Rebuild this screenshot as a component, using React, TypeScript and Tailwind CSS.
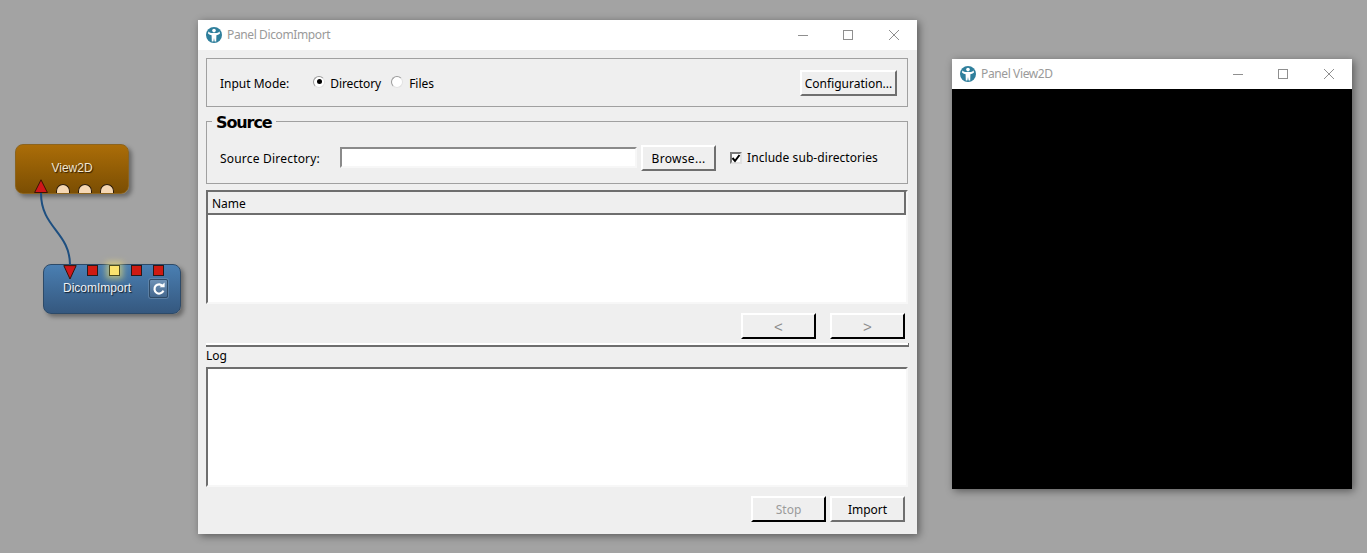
import React from "react";

const uiFont = "font-['Noto_Sans',sans-serif]";

function PanelLogo() {
  return (
    <svg width="16" height="16" viewBox="0 0 16 16" className="shrink-0">
      <circle cx="8" cy="8" r="8" fill="#2f7f9c" />
      <circle cx="8" cy="3.6" r="1.8" fill="#fff" />
      <path d="M2.4 4.4 C4 6 6 6 8 6 C10 6 12 6 13.6 4.4 L14 6.4 C12.6 7.6 11.4 8 10.4 8.2 L10.2 14.6 L8.6 14.6 L8 11 L7.4 14.6 L5.8 14.6 L5.6 8.2 C4.6 8 3.4 7.6 2 6.4 Z" fill="#fff" />
    </svg>
  );
}

function TitleBar({ title }: { title: string }) {
  return (
    <div className="h-[30px] bg-white flex items-center pl-2 shrink-0">
      <PanelLogo />
      <span className={`ml-[5px] text-[12px] tracking-[-0.38px] text-[#9a9a9a] ${uiFont}`}>{title}</span>
      <div className="ml-auto flex items-center">
        <svg width="46" height="12" viewBox="0 0 46 12"><path d="M19 6.5 H29" stroke="#8f8f8f" strokeWidth="1" /></svg>
        <svg width="46" height="12" viewBox="0 0 46 12"><rect x="18.5" y="1.5" width="9" height="9" fill="none" stroke="#8f8f8f" /></svg>
        <svg width="46" height="12" viewBox="0 0 46 12"><path d="M18 1 L28 11 M28 1 L18 11" stroke="#8f8f8f" strokeWidth="1" /></svg>
      </div>
    </div>
  );
}

function QtButton({ label, disabled, dark, className }: { label: string; disabled?: boolean; dark?: boolean; className: string }) {
  const edge = dark ? "border-r-[#000] border-b-[#000]" : "border-r-[#6f6f6f] border-b-[#6f6f6f]";
  return (
    <button className={`h-[26px] pt-[2px] bg-[#efefef] border-2 border-t-white border-l-white ${edge} text-[12px] leading-none ${disabled ? "text-[#9b9b9b]" : "text-black"} ${uiFont} ${className}`}>
      {label}
    </button>
  );
}

function ArrowButton({ label }: { label: string }) {
  return (
    <button className="h-[26px] w-[75px] bg-[#efefef] border-2 border-t-white border-l-white border-r-black border-b-black text-[15px] leading-none text-[#8c8c8c] font-['Liberation_Sans',sans-serif]">
      {label}
    </button>
  );
}

function SunkenBox({ className, children }: { className: string; children?: React.ReactNode }) {
  return (
    <div className={`bg-white border-2 border-t-[#6e6e6e] border-l-[#6e6e6e] border-r-[#f7f7f7] border-b-[#f7f7f7] ${className}`}>{children}</div>
  );
}

function Radio({ className, checked }: { className: string; checked?: boolean }) {
  return (
    <span className={`w-[12px] h-[12px] rounded-full bg-white border border-t-[#9a9a9a] border-l-[#9a9a9a] border-r-[#e2e2e2] border-b-[#e2e2e2] flex items-center justify-center ${className}`}>
      {checked && <span className="w-[5px] h-[5px] rounded-full bg-black" />}
    </span>
  );
}

function DicomWindow() {
  return (
    <div className="absolute left-[198px] top-[20px] w-[719px] h-[514px] bg-[#efefef] flex flex-col shadow-[2px_2px_8px_rgba(0,0,0,0.45)]">
      <TitleBar title="Panel DicomImport" />
      <div className={`flex-1 flex flex-col pl-2 pr-[9px] pt-2 text-[12px] text-black ${uiFont}`}>
        <div className="h-[49px] border border-[#a0a0a0] flex items-center pl-[13px] pr-[11px] shrink-0">
          <span className="mt-[2px]">Input Mode:</span>
          <Radio checked className="ml-[24px] -mt-[2px]" />
          <span className="ml-[5px] mt-[2px] tracking-[-0.1px]">Directory</span>
          <Radio className="ml-[10px] -mt-[2px]" />
          <span className="ml-[6px] mt-[2px]">Files</span>
          <QtButton label="Configuration..." className="ml-auto -mr-px w-[97px]" />
        </div>

        <div className="relative mt-[14px] h-[63px] border border-[#a0a0a0] flex items-center pl-[13px] shrink-0">
          <span className="absolute left-[5px] -top-[9px] px-[4px] bg-[#efefef] text-[16px] leading-[20px] font-bold font-['DejaVu_Sans',sans-serif] tracking-[-1.1px]">Source</span>
          <span className="mt-[12px] tracking-[0.2px]">Source Directory:</span>
          <SunkenBox className="ml-[20px] mt-[10px] w-[297px] h-[21px] border-t-[#8a8a8a] border-l-[#8a8a8a]" />
          <QtButton label="Browse..." className="ml-[4px] mt-[10px] w-[75px] tracking-[0.3px]" />
          <span className="ml-[14px] mt-[10px] w-[12px] h-[12px] bg-white border-2 border-t-[#7a7a7a] border-l-[#7a7a7a] border-r-[#e2e2e2] border-b-[#e2e2e2] flex items-center justify-center">
            <svg width="10" height="10" viewBox="0 0 10 10" className="shrink-0"><path d="M1.5 5 L4 8 L8.5 2" fill="none" stroke="#000" strokeWidth="2" /></svg>
          </span>
          <span className="ml-[5px] mt-[11px] tracking-[0.07px]">Include sub-directories</span>
        </div>

        <SunkenBox className="mt-[6px] h-[114px] flex flex-col shrink-0">
          <div className="h-[23px] bg-[#efefef] border-b-2 border-b-[#6e6e6e] border-r-2 border-r-[#6e6e6e] pl-[4px] leading-[23px]">Name</div>
        </SunkenBox>

        <div className="mt-[9px] flex justify-end gap-[14px] pr-[3px] shrink-0">
          <ArrowButton label="<" />
          <ArrowButton label=">" />
        </div>

        <div className="relative mt-[4px] h-[4px] -mr-px border-t-2 border-t-white border-b-2 border-b-[#6e6e6e] shrink-0">
          <span className="absolute right-0 -top-[2px] w-px h-[4px] bg-[#6e6e6e]" />
        </div>
        <div className="h-[20px] leading-[17px] shrink-0">Log</div>

        <SunkenBox className="h-[120px] shrink-0" />

        <div className="mt-[9px] flex justify-end gap-[4px] pr-[3px] shrink-0">
          <QtButton label="Stop" disabled dark className="w-[75px]" />
          <QtButton label="Import" className="w-[75px]" />
        </div>
      </div>
    </div>
  );
}

function ViewWindow() {
  return (
    <div className="absolute left-[952px] top-[59px] w-[400px] h-[430px] flex flex-col shadow-[2px_2px_8px_rgba(0,0,0,0.45)]">
      <TitleBar title="Panel View2D" />
      <div className="flex-1 bg-black" />
    </div>
  );
}

function View2DNode() {
  return (
    <div className="absolute left-[15px] top-[144px] w-[114px] h-[50px] rounded-[8px] border border-[#8b6420] bg-gradient-to-b from-[#ab6d08] to-[#7b4e03] shadow-[3px_3px_4px_rgba(0,0,0,0.35)] flex flex-col items-center">
      <span className="mt-[15px] text-[12px] leading-[16px] text-[#f2e6d2] [text-shadow:1px_1px_1px_rgba(0,0,0,0.7)] font-['Liberation_Sans',sans-serif]">View2D</span>
      <div className="absolute left-[18px] bottom-0 flex items-end gap-[8px]">
        <svg width="14" height="14" viewBox="0 0 14 14"><path d="M7 0.8 L13.4 13.5 H0.6 Z" fill="#d0171a" stroke="#3a1406" strokeWidth="1" /></svg>
        <span className="w-[14px] h-[9px] rounded-t-full bg-[#f5d7b4] border border-b-0 border-[#2a1a08]" />
        <span className="w-[14px] h-[9px] rounded-t-full bg-[#f5d7b4] border border-b-0 border-[#2a1a08]" />
        <span className="w-[14px] h-[9px] rounded-t-full bg-[#f5d7b4] border border-b-0 border-[#2a1a08]" />
      </div>
    </div>
  );
}

function DicomNode() {
  const port = "w-[11px] h-[11px] bg-[#cf1a12] border border-[#2a1a1a]";
  return (
    <div className="absolute left-[43px] top-[264px] w-[138px] h-[50px] rounded-[8px] border border-[#2d4a68] bg-gradient-to-b from-[#4a7fb2] to-[#35587f] shadow-[3px_3px_4px_rgba(0,0,0,0.35)]">
      <div className="absolute left-[19px] top-0 flex items-start">
        <svg width="14" height="15" viewBox="0 0 14 15"><path d="M0.8 0.6 H13.2 L7 14 Z" fill="#d0171a" stroke="#3a1406" strokeWidth="1" /></svg>
        <span className={`${port} ml-[10px]`} />
        <span className="ml-[11px] w-[11px] h-[11px] bg-[#fbe36e] border border-[#4a4a20] shadow-[0_0_6px_3px_rgba(250,230,110,0.6)]" />
        <span className={`${port} ml-[11px]`} />
        <span className={`${port} ml-[11px]`} />
      </div>
      <span className="absolute left-[19px] top-[15px] text-[12px] leading-[16px] text-[#eef2f6] [text-shadow:1px_1px_1px_rgba(0,0,0,0.7)] font-['Liberation_Sans',sans-serif]">DicomImport</span>
      <div className="absolute left-[105px] top-[14px] w-[19px] h-[19px] rounded-[2px] bg-gradient-to-b from-[#6f92b6] to-[#44688f] border border-[#2e4a66] flex items-center justify-center shadow-[0_0_0_1px_rgba(120,150,180,0.5)]">
        <svg width="14" height="14" viewBox="0 0 14 14">
          <path d="M10.8 4.2 A4.6 4.6 0 1 0 11.4 8.6" fill="none" stroke="#fff" strokeWidth="2.2" />
          <path d="M7.6 5.2 H12.6 V0.6 Z" fill="#fff" />
        </svg>
      </div>
    </div>
  );
}

export default function App() {
  return (
    <div className="relative w-[1367px] h-[553px] overflow-hidden bg-[#a3a3a3]">
      <View2DNode />
      <DicomNode />
      <svg className="absolute left-0 top-0" width="190" height="330" viewBox="0 0 190 330">
        <path d="M41 193 C41 228 70 232 70 265" fill="none" stroke="#1e4f80" strokeWidth="2" />
      </svg>
      <DicomWindow />
      <ViewWindow />
    </div>
  );
}
